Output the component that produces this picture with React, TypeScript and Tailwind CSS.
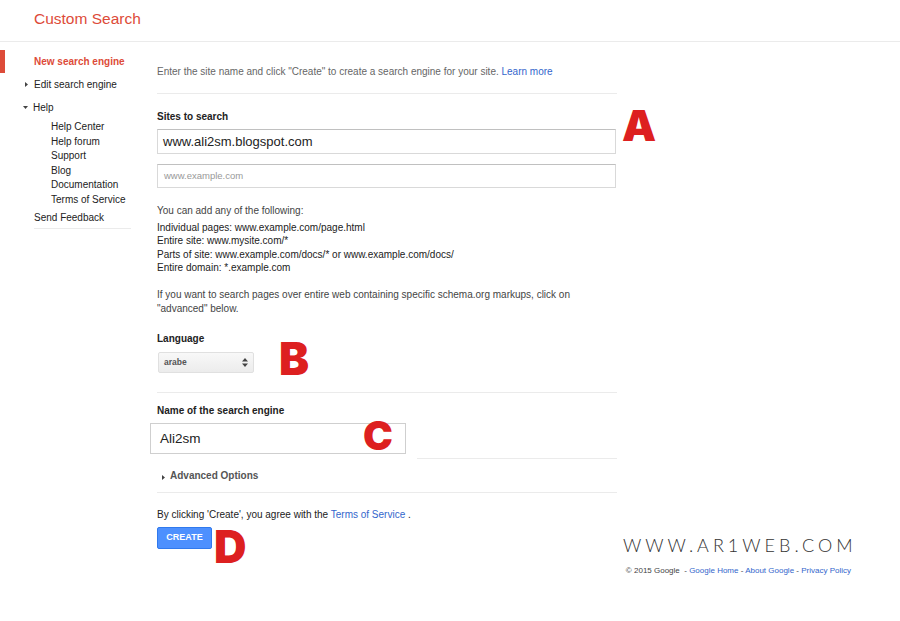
const helpLinks = ['Help Center', 'Help forum', 'Support', 'Blog', 'Documentation', 'Terms of Service']

function Marker({ letter, className }: { letter: string; className: string }) {
  return (
    <span
      className={`absolute font-['Inter',sans-serif] font-black text-[#dd2020] leading-none ${className}`}
    >
      {letter}
    </span>
  )
}

function Caret({ down }: { down?: boolean }) {
  return (
    <svg width="5" height="5" viewBox="0 0 5 5" className="text-[#444]">
      {down ? <path d="M0 1h5L2.5 4z" fill="currentColor" /> : <path d="M1 0v5l3-2.5z" fill="currentColor" />}
    </svg>
  )
}

export default function App() {
  return (
    <div className="relative w-[900px] h-[621px] bg-white font-['Liberation_Sans',Arial,sans-serif] text-[10px] overflow-hidden">
      {/* Header */}
      <header className="h-[42px] border-b border-[#ebebeb] pl-[34px] flex items-center pb-[4px]">
        <h1 className="text-[15.5px] text-[#dd4b39]">Custom Search</h1>
      </header>

      <div className="flex">
        {/* Sidebar */}
        <aside className="w-[157px] pt-[8px]">
          <div className="relative h-[23px] flex items-center pl-[34px] font-bold text-[#dd4b39]">
            <span className="absolute left-0 top-0 w-[5px] h-[23px] bg-[#dd4b39]" />
            New search engine
          </div>
          <div className="h-[23px] flex items-center pl-[24px] gap-[5px] text-[#222]">
            <Caret />
            Edit search engine
          </div>
          <div className="h-[23px] flex items-center pl-[23px] gap-[5px] text-[#222]">
            <Caret down />
            Help
          </div>
          <ul className="pl-[51px] pt-px text-[#222]">
            {helpLinks.map((l) => (
              <li key={l} className="leading-[14.5px]">
                {l}
              </li>
            ))}
          </ul>
          <div className="ml-[34px] w-[97px] h-[22px] flex items-center border-b border-[#ebebeb] text-[#222]">
            Send Feedback
          </div>
        </aside>

        {/* Main */}
        <main className="w-[460px]">
          <p className="pt-[23px] pb-[14px] leading-[14px] text-[#666] border-b border-[#ebebeb]">
            Enter the site name and click "Create" to create a search engine for your site.{' '}
            <a className="text-[#3366cc]">Learn more</a>
          </p>

          <section className="pt-[16px] border-b border-[#ebebeb] pb-[19px]">
            <h2 className="font-bold text-[#222] leading-[14px]">Sites to search</h2>
            <div className="mt-[5px] h-[25px] w-[459px] border border-[#d9d9d9] border-t-[#c0c0c0] flex items-center px-[5px] text-[13px] text-[#222]">
              www.ali2sm.blogspot.com
            </div>
            <div className="mt-[10px] h-[24px] w-[459px] border border-[#d9d9d9] border-t-[#c0c0c0] flex items-center px-[6px] text-[9.5px] text-[#999]">
              www.example.com
            </div>
            <p className="mt-[16px] leading-[14px] text-[#444]">You can add any of the following:</p>
            <div className="mt-[3px] leading-[13.3px] text-[#222]">
              <p>Individual pages: www.example.com/page.html</p>
              <p>Entire site: www.mysite.com/*</p>
              <p>Parts of site: www.example.com/docs/* or www.example.com/docs/</p>
              <p>Entire domain: *.example.com</p>
            </div>
            <p className="mt-[14px] leading-[14px] text-[#444]">
              If you want to search pages over entire web containing specific schema.org markups, click on
              <br />
              "advanced" below.
            </p>
            <h2 className="mt-[16px] font-bold text-[#222] leading-[14px]">Language</h2>
            <div className="mt-[6px] ml-px w-[96px] h-[21px] rounded-[2px] border border-[#e0e0e0] bg-gradient-to-b from-[#f8f8f8] to-[#ececec] flex items-center justify-between pl-[5px] pr-[5px] text-[8.5px] font-bold text-[#555]">
              arabe
              <svg width="6" height="9" viewBox="0 0 6 9" className="text-[#444]">
                <path d="M0 3.5L3 0l3 3.5zM0 5.5h6L3 9z" fill="currentColor" />
              </svg>
            </div>
          </section>

          <section className="pt-[11px]">
            <h2 className="font-bold text-[#222] leading-[14px]">Name of the search engine</h2>
            <div className="mt-[5px] -ml-[7px] h-[31px] w-[256px] border border-[#cfcfcf] flex items-center px-[9px] text-[13.5px] text-[#222]">
              Ali2sm
            </div>
          </section>
          <div className="mt-[4px] ml-[260px] h-px bg-[#ebebeb]" />

          <div className="h-[34px] flex items-center gap-[4px] pl-[4px] border-b border-[#ebebeb] font-bold text-[#555]">
            <span className="mt-[4px]">
              <Caret />
            </span>
            Advanced Options
          </div>

          <p className="mt-[15px] leading-[14px] text-[#222]">
            By clicking 'Create', you agree with the <a className="text-[#3366cc]">Terms of Service</a> .
          </p>
          <button className="mt-[5px] h-[22px] w-[55px] rounded-[2px] bg-[#4d90fe] border border-[#3079ed] text-white text-[9px] font-bold flex items-center justify-center">
            CREATE
          </button>
        </main>
      </div>

      {/* Footer */}
      <footer className="flex justify-end pr-[49px] mt-[16px] text-[8px] text-[#444]">
        <span>
          © 2015 Google&nbsp; - <a className="text-[#3366cc]">Google Home</a> -{' '}
          <a className="text-[#3366cc]">About Google</a> - <a className="text-[#3366cc]">Privacy Policy</a>
        </span>
      </footer>

      {/* Overlays */}
      <span className="absolute left-[623px] top-[536px] font-['Lato',sans-serif] font-light text-[18px] tracking-[4px] text-[#333] leading-none">
        WWW.AR1WEB.COM
      </span>
      <Marker letter="A" className="left-[622px] top-[104px] text-[43px]" />
      <Marker letter="B" className="left-[279px] top-[336px] text-[45px]" />
      <Marker letter="C" className="left-[363px] top-[416px] text-[40px]" />
      <Marker letter="D" className="left-[214px] top-[524px] text-[45px]" />
    </div>
  )
}
